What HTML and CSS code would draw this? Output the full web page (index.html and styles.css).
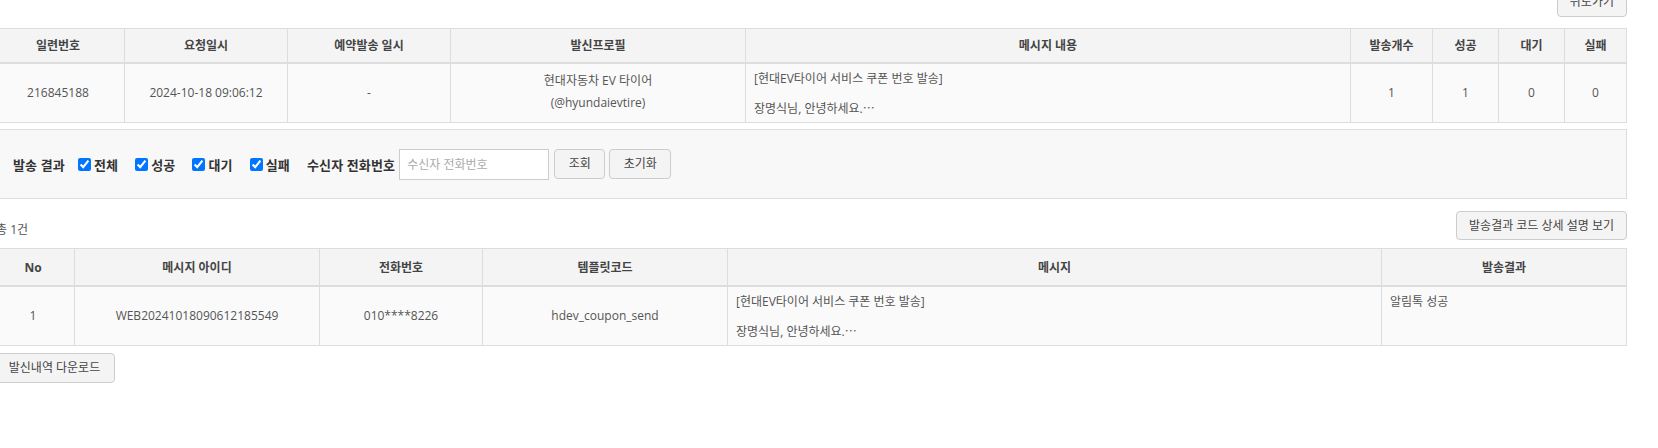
FILE: index.html
```html
<!DOCTYPE html>
<html lang="ko">
<head>
<meta charset="utf-8">
<title>발송 상세</title>
<link rel="stylesheet" href="styles.css">
</head>
<body>
<div class="page">
  <div class="top-bar">
    <button class="btn" type="button">뒤로가기</button>
  </div>

  <table class="grid grid-summary">
    <colgroup>
      <col style="width:133px"><col style="width:163px"><col style="width:163px"><col style="width:295px"><col style="width:605px"><col style="width:82px"><col style="width:66px"><col style="width:66px"><col>
    </colgroup>
    <thead>
      <tr>
        <th>일련번호</th><th>요청일시</th><th>예약발송 일시</th><th>발신프로필</th><th>메시지 내용</th><th>발송개수</th><th>성공</th><th>대기</th><th>실패</th>
      </tr>
    </thead>
    <tbody>
      <tr>
        <td>216845188</td>
        <td>2024-10-18 09:06:12</td>
        <td>-</td>
        <td class="profile"><div>현대자동차 EV 타이어</div><div class="sub">(@hyundaievtire)</div></td>
        <td class="msg"><div>[현대EV타이어 서비스 쿠폰 번호 발송]</div><div class="gap">장명식님, 안녕하세요.<span class="ell">…</span></div></td>
        <td>1</td><td>1</td><td>0</td><td>0</td>
      </tr>
    </tbody>
  </table>

  <div class="filter">
    <span class="label">발송 결과</span>
    <label class="check"><input type="checkbox" checked>전체</label>
    <label class="check"><input type="checkbox" checked>성공</label>
    <label class="check"><input type="checkbox" checked>대기</label>
    <label class="check"><input type="checkbox" checked>실패</label>
    <span class="label phone-label">수신자 전화번호</span>
    <input class="text-input" type="text" placeholder="수신자 전화번호">
    <button class="btn btn-search" type="button">조회</button>
    <button class="btn btn-reset" type="button">초기화</button>
  </div>

  <div class="list-bar">
    <span class="total">총 1건</span>
    <button class="btn" type="button">발송결과 코드 상세 설명 보기</button>
  </div>

  <table class="grid grid-list">
    <colgroup>
      <col style="width:83px"><col style="width:245px"><col style="width:163px"><col style="width:245px"><col style="width:654px"><col>
    </colgroup>
    <thead>
      <tr>
        <th>No</th><th>메시지 아이디</th><th>전화번호</th><th>템플릿코드</th><th>메시지</th><th>발송결과</th>
      </tr>
    </thead>
    <tbody>
      <tr>
        <td>1</td>
        <td>WEB20241018090612185549</td>
        <td>010****8226</td>
        <td>hdev_coupon_send</td>
        <td class="msg"><div>[현대EV타이어 서비스 쿠폰 번호 발송]</div><div class="gap">장명식님, 안녕하세요.<span class="ell">…</span></div></td>
        <td class="result">알림톡 성공</td>
      </tr>
    </tbody>
  </table>

  <div class="bottom-bar">
    <button class="btn btn-download" type="button">발신내역 다운로드</button>
  </div>
</div>
</body>
</html>
```

FILE: styles.css
```css
html, body {
  margin: 0;
  padding: 0;
  background: #ffffff;
}

body {
  font-family: "Open Sans", "Noto Sans CJK KR", sans-serif;
  font-size: 12px;
  color: #555555;
  overflow: hidden;
}

.page {
  width: 1636px;
  margin: -13px 0 0 -9px;
}

.top-bar {
  display: flex;
  justify-content: flex-end;
  margin-bottom: 11px;
}

.btn {
  font-family: inherit;
  font-size: 12px;
  color: #444444;
  background: #f4f4f4;
  border: 1px solid #cccccc;
  border-radius: 4px;
  height: 30px;
  padding: 0 12px;
  line-height: 28px;
  cursor: pointer;
}

.grid {
  width: 100%;
  border-collapse: collapse;
  table-layout: fixed;
  background: #fafafa;
}

.grid th,
.grid td {
  border: 1px solid #dddddd;
  text-align: center;
  vertical-align: middle;
}

.grid th {
  background: #f4f4f4;
  color: #444444;
  font-weight: 700;
  height: 33px;
  padding: 0 8px;
  line-height: 17px;
  border-bottom-width: 2px;
}

.grid-list th {
  height: 36px;
}

.grid td {
  padding: 8px;
  height: 42px;
  line-height: 14px;
}

.grid td.profile {
  line-height: 20px;
  padding: 6px 8px 8px;
}

.grid td.profile .sub {
  margin-top: 2px;
}

.grid td.msg {
  text-align: left;
  line-height: 14px;
  padding: 8px 8px 6px;
}

.grid td.msg .gap {
  margin-top: 16px;
}

.ell {
  font-family: "Noto Sans CJK KR", sans-serif;
  line-height: 0;
}

.grid td.result {
  text-align: left;
  vertical-align: top;
}

.grid-summary {
  margin-bottom: 6px;
}

.filter {
  display: flex;
  align-items: center;
  height: 68px;
  border: 1px solid #dddddd;
  background: #f8f8f8;
  padding: 0 0 0 21px;
  color: #333333;
  font-size: 13px;
}

.filter .label {
  font-weight: 700;
  letter-spacing: 0.15px;
  margin-right: 13px;
}

.check {
  display: inline-flex;
  align-items: center;
  font-weight: 700;
  letter-spacing: 0.15px;
  margin-right: 17px;
}

.check input {
  width: 13px;
  height: 13px;
  margin: 0 3px 0 0;
}

.phone-label {
  margin-right: 4px !important;
}

.text-input {
  box-sizing: border-box;
  width: 150px;
  height: 31px;
  border: 1px solid #cccccc;
  background: #ffffff;
  padding: 0 7px;
  font-family: inherit;
  font-size: 12px;
  color: #555555;
  margin-right: 5px;
}

.text-input::placeholder {
  color: #aaaaaa;
}

.btn-search {
  width: 51px;
  margin-right: 4px;
}

.btn-reset {
  width: 62px;
}

.list-bar {
  display: flex;
  align-items: center;
  justify-content: space-between;
  margin: 12px 0 8px;
  padding-left: 5px;
}

.list-bar .btn {
  height: 29px;
  line-height: 27px;
}

.total {
  color: #555555;
  padding-top: 6px;
}

.bottom-bar {
  margin-top: 7px;
  padding-left: 3px;
}

.btn-download {
  width: 121px;
}
```
